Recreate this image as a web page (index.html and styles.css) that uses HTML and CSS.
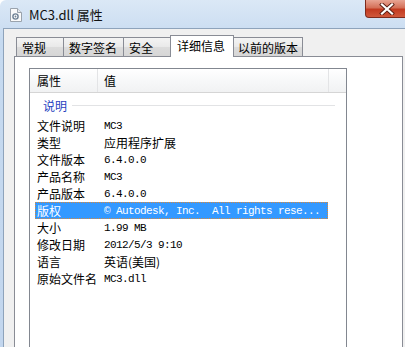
FILE: index.html
```html
<!DOCTYPE html>
<html lang="zh-CN">
<head>
    <meta charset="UTF-8">
    <meta name="viewport" content="width=device-width, initial-scale=1.0">
    <title>MC3.dll 属性</title>
    <link rel="stylesheet" href="styles.css">
</head>
<body>

    <div class="window">

        <!-- Title Bar -->
        <div class="titlebar">
            <svg class="app-icon" width="12" height="14" viewBox="0 0 12 14">
                <path d="M0.5 0.5h7l4 4v9h-11z" fill="#fafafa" stroke="#9aa3ad"/>
                <path d="M7.5 0.5v4h4" fill="#e4e8ec" stroke="#9aa3ad"/>
                <circle cx="5.5" cy="8.5" r="2.6" fill="none" stroke="#6f8194" stroke-width="1.4"/>
                <circle cx="5.5" cy="8.5" r="0.9" fill="#6f8194"/>
            </svg>
            <span class="title">MC3.dll 属性</span>
            <div class="close-btn">
                <svg width="16" height="12" viewBox="0 0 16 12">
                    <path d="M3 1.5l10 9M13 1.5l-10 9" stroke="#5a1e14" stroke-width="4" stroke-linecap="square"/>
                    <path d="M3 1.5l10 9M13 1.5l-10 9" stroke="#ffffff" stroke-width="2.2" stroke-linecap="square"/>
                </svg>
            </div>
        </div>

        <!-- Client Area -->
        <div class="client">
            <div class="tabs">
                <div class="tab t1">常规</div>
                <div class="tab t2">数字签名</div>
                <div class="tab t3">安全</div>
                <div class="tab active">详细信息</div>
                <div class="tab t5">以前的版本</div>
            </div>

            <div class="panel">
                <div class="listview">
                    <div class="lv-header">
                        <div class="hcol col-name">属性</div>
                        <div class="hcol col-value">值</div>
                        <div class="hcol col-rest"></div>
                    </div>

                    <div class="group">
                        <span>说明</span>
                        <div class="group-line"></div>
                    </div>

                    <div class="row"><span class="name">文件说明</span><span class="val mono">MC3</span></div>
                    <div class="row"><span class="name">类型</span><span class="val">应用程序扩展</span></div>
                    <div class="row"><span class="name">文件版本</span><span class="val mono">6.4.0.0</span></div>
                    <div class="row"><span class="name">产品名称</span><span class="val mono">MC3</span></div>
                    <div class="row"><span class="name">产品版本</span><span class="val mono">6.4.0.0</span></div>
                    <div class="row selected"><span class="name">版权</span><span class="val mono">© Autodesk, Inc.  All rights rese...</span></div>
                    <div class="row"><span class="name">大小</span><span class="val mono">1.99 MB</span></div>
                    <div class="row"><span class="name">修改日期</span><span class="val mono">2012/5/3 9:10</span></div>
                    <div class="row"><span class="name">语言</span><span class="val">英语(美国)</span></div>
                    <div class="row"><span class="name">原始文件名</span><span class="val mono">MC3.dll</span></div>
                </div>
            </div>
        </div>

    </div>

</body>
</html>
```

FILE: styles.css
```css
/* General */
body { margin: 0; width: 405px; height: 347px; overflow: hidden; font-family: "Noto Sans CJK SC", "Noto Sans", sans-serif; font-size: 12px; color: #000; }

/* Window frame */
.window { display: flex; flex-direction: column; height: 347px; overflow: hidden; background: linear-gradient(#dbe8f6, #c6daf0 40px, #c2d6ee); border-top-left-radius: 6px; }

/* Title bar */
.titlebar { display: flex; align-items: center; flex-shrink: 0; height: 28px; padding-left: 10px; }
.app-icon { margin-top: 1px; }
.title { margin-left: 7px; font-size: 13px; color: #111; }
.close-btn { align-self: flex-start; margin-left: auto; margin-right: -3px; width: 43px; height: 18px; box-sizing: border-box;
             display: flex; align-items: center; justify-content: center;
             background: linear-gradient(#e8a493, #d47058 45%, #c23a20 55%, #d0583c);
             border: 1px solid #7d2a1c; border-top: none; border-radius: 0 0 4px 4px; }

/* Client area */
.client { flex: 1; min-height: 0; margin-left: 3px; border-left: 1px solid #8ea3bb; border-top: 1px solid #8ea3bb; background: #f0f0f0; padding: 6px 0 0 10px; }

/* Tabs */
.tabs { display: flex; align-items: flex-end; height: 21px; padding-left: 2px; position: relative; z-index: 1; }
.tab { box-sizing: border-box; height: 19px; border: 1px solid #898c95; border-bottom: none; padding-left: 5px; line-height: 19px;
       background: linear-gradient(#f4f4f4, #e9e9e9 50%, #dcdcdc 51%, #d6d6d6); }
.t1 { width: 48px; }
.t2 { width: 61px; margin-left: -1px; }
.t3 { width: 49px; margin-left: -1px; }
.tab.active { width: 64px; height: 22px; margin-left: -2px; margin-bottom: -1px; background: #fff; padding-left: 6px; line-height: 20px; position: relative; }
.t5 { width: 70px; margin-left: -1px; padding-left: 4px; }

/* Panel */
.panel { width: 389px; height: 300px; box-sizing: border-box; border: 1px solid #898c95; background: #fff; padding: 11px 0 0 14px; }

/* List view */
.listview { width: 318px; height: 290px; box-sizing: border-box; border: 1px solid #828790; }
.lv-header { display: flex; height: 24px; box-sizing: border-box; border-bottom: 1px solid #d5d5d5; background: linear-gradient(#ffffff, #f7f8f9 50%, #f1f2f3); }
.hcol { box-sizing: border-box; padding: 2px 0 0 7px; line-height: 20px; }
.col-name { width: 68px; border-right: 1px solid #e3e4e6; }
.col-value { width: 231px; padding-left: 6px; border-right: 1px solid #e3e4e6; }
.col-rest { flex: 1; }

.group { display: flex; align-items: center; height: 24px; padding-left: 13px; color: #1f3fbf; }
.group-line { flex: 1; height: 1px; background: #e2e3e5; margin: 1px 11px 0 5px; }

.row { display: flex; align-items: center; height: 17px; width: 293px; margin-left: 5px; box-sizing: border-box; }
.row .name { width: 67px; padding-left: 2px; flex-shrink: 0; }
.row .val { white-space: pre; }
.mono { font-family: "Liberation Mono", monospace; font-size: 11px; letter-spacing: -0.6px; }
.row.selected { background: #3399ff; color: #fff; outline: 1px dotted #d9893a; outline-offset: -1px; }
```
